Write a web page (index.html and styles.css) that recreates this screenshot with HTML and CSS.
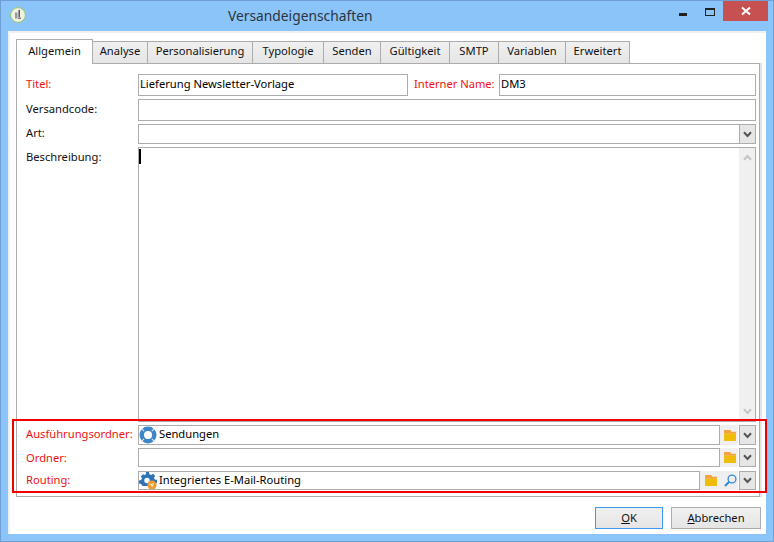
FILE: index.html
```html
<!DOCTYPE html>
<html lang="de">
<head>
<meta charset="utf-8">
<title>Versandeigenschaften</title>
<link rel="stylesheet" href="styles.css">
</head>
<body>
<div class="window">
  <header class="titlebar">
    <svg class="app-icon" viewBox="0 0 16 16" width="16" height="16">
      <circle cx="8" cy="8" r="7.400" fill="#eef2e4" stroke="#9cc45c" stroke-width="1"/>
      <path d="M5 5.500h2.500v6H5z" fill="#9a9a9a"/>
      <path d="M8.500 3h1.400v7H8.500z" fill="#4a4a4a"/>
      <path d="M8 10.500h3v1.500H8z" fill="#777"/>
    </svg>
    <span class="title">Versandeigenschaften</span>
    <div class="controls">
      <span class="ctl-min"></span>
      <span class="ctl-max"></span>
      <span class="ctl-close">
        <svg viewBox="0 0 10 10" width="10" height="10"><path d="M1 1.500 9 8.500M9 1.500 1 8.500" stroke="#fff" stroke-width="2" fill="none"/></svg>
      </span>
    </div>
  </header>

  <div class="client">
    <nav class="tabs">
      <span class="tab active">Allgemein</span>
      <span class="tab">Analyse</span>
      <span class="tab">Personalisierung</span>
      <span class="tab">Typologie</span>
      <span class="tab">Senden</span>
      <span class="tab">Gültigkeit</span>
      <span class="tab">SMTP</span>
      <span class="tab">Variablen</span>
      <span class="tab">Erweitert</span>
    </nav>

    <main class="panel">
      <div class="row row-22">
        <label class="label req">Titel:</label>
        <div class="field field-title">Lieferung Newsletter-Vorlage</div>
        <label class="label-inline req">Interner Name:</label>
        <div class="field grow">DM3</div>
      </div>
      <div class="row row-22">
        <label class="label">Versandcode:</label>
        <div class="field grow"></div>
      </div>
      <div class="row row-20">
        <label class="label label-tight">Art:</label>
        <div class="field grow"></div>
        <span class="drop"><svg class="chev" viewBox="0 0 9 7" width="9" height="7"><path d="M1 1.200 4.500 5 8 1.200" fill="none" stroke="#555" stroke-width="2"/></svg></span>
      </div>
      <div class="row row-memo">
        <label class="label">Beschreibung:</label>
        <div class="memo">
          <div class="memo-text"><span class="caret"></span></div>
          <div class="scroll">
            <svg viewBox="0 0 9 7" width="9" height="7"><path d="M1 5.800 4.500 2 8 5.800" fill="none" stroke="#c4c4c4" stroke-width="2"/></svg>
            <svg viewBox="0 0 9 7" width="9" height="7"><path d="M1 1.200 4.500 5 8 1.200" fill="none" stroke="#c4c4c4" stroke-width="2"/></svg>
          </div>
        </div>
      </div>
      <div class="row row-20 row-folder">
        <label class="label label-tight req">Ausführungsordner:</label>
        <div class="field grow with-icon">
          <svg class="icon" viewBox="0 0 18 18" width="18" height="18">
            <circle cx="9" cy="9" r="6.300" fill="none" stroke="#3f86c8" stroke-width="4.400"/>
            <path d="M9 0v3.500M9 14.500V18M0 9h3.500M14.500 9H18" stroke="#dcebf7" stroke-width="1" transform="rotate(45 9 9)"/>
          </svg>
          <span class="icon-text">Sendungen</span>
        </div>
        <span class="tool">
          <svg viewBox="0 0 13 12" width="12" height="11"><path d="M0 0h7l1 2h5v2H0z" fill="#f2a33a"/><path d="M0 4h13v8H0z" fill="#efbc0a"/></svg>
        </span>
        <span class="drop"><svg class="chev" viewBox="0 0 9 7" width="9" height="7"><path d="M1 1.200 4.500 5 8 1.200" fill="none" stroke="#555" stroke-width="2"/></svg></span>
      </div>
      <div class="row row-19 row-folder">
        <label class="label req">Ordner:</label>
        <div class="field grow"></div>
        <span class="tool">
          <svg viewBox="0 0 13 12" width="12" height="11"><path d="M0 0h7l1 2h5v2H0z" fill="#f2a33a"/><path d="M0 4h13v8H0z" fill="#efbc0a"/></svg>
        </span>
        <span class="drop"><svg class="chev" viewBox="0 0 9 7" width="9" height="7"><path d="M1 1.200 4.500 5 8 1.200" fill="none" stroke="#555" stroke-width="2"/></svg></span>
      </div>
      <div class="row row-19 row-folder row-routing">
        <label class="label label-tight req">Routing:</label>
        <div class="field grow with-icon">
          <svg class="icon" viewBox="0 0 18 18" width="18" height="18">
            <path d="M7 0h3l.4 2.200 1.800.800 1.900-1.200 2.100 2.100-1.200 1.900.800 1.800 2.200.4v3l-2.200.4-1 2.600H3.500l-1.300-2L0 11.500v-3l2.200-.4.800-1.800-1.200-1.900 2.100-2.100L5.800 3l1-.8z" fill="#2f74b5"/>
            <circle cx="8" cy="8.500" r="2.700" fill="#fff"/>
            <circle cx="13" cy="13" r="4.600" fill="#f09a2a"/>
            <path d="M10.500 12l2 .5.500 2 1.500-3.500" stroke="#fff" stroke-width="0.900" fill="none"/>
          </svg>
          <span class="icon-text">Integriertes E-Mail-Routing</span>
        </div>
        <span class="tool tool-wide">
          <svg viewBox="0 0 13 12" width="12" height="11"><path d="M0 0h7l1 2h5v2H0z" fill="#f2a33a"/><path d="M0 4h13v8H0z" fill="#efbc0a"/></svg>
          <svg viewBox="0 0 13 13" width="13" height="13"><circle cx="8" cy="5" r="3.900" fill="none" stroke="#2f8ade" stroke-width="1.300"/><path d="M5.200 7.800 1 12" stroke="#2f8ade" stroke-width="2"/></svg>
        </span>
        <span class="drop"><svg class="chev" viewBox="0 0 9 7" width="9" height="7"><path d="M1 1.200 4.500 5 8 1.200" fill="none" stroke="#555" stroke-width="2"/></svg></span>
      </div>
    </main>

    <footer class="actions">
      <button class="btn btn-ok"><u>O</u>K</button>
      <button class="btn btn-cancel"><u>A</u>bbrechen</button>
    </footer>
  </div>

  <div class="highlight"></div>
</div>
</body>
</html>
```

FILE: styles.css
```css
* { box-sizing: border-box; }
html, body { margin: 0; padding: 0; }
body {
  width: 774px;
  height: 542px;
  overflow: hidden;
  font-family: "Noto Sans", "Open Sans", sans-serif;
  font-size: 11.200px;
  color: #000;
}
.window {
  position: relative;
  width: 774px;
  height: 542px;
  padding: 0 7px 7px;
  background: #8ac4f8;
  border: 1px solid #6f9fd2;
  display: flex;
  flex-direction: column;
}
.titlebar {
  height: 30px;
  margin: 0 -7px;
  flex: none;
  display: flex;
  align-items: flex-start;
  position: relative;
}
.app-icon { margin: 6px 0 0 9px; flex: none; }
.title {
  margin: 5px 0 0 202px;
  font-size: 13.800px;
  line-height: 20px;
  color: #2b3440;
}
.controls {
  margin-left: auto;
  margin-right: 5px;
  display: flex;
  align-items: flex-start;
}
.ctl-min {
  width: 8px;
  height: 3px;
  margin-top: 12px;
  background: #222;
}
.ctl-max {
  width: 10px;
  height: 8px;
  margin: 7px 8px 0 18px;
  border: 1px solid #222;
  border-top-width: 2px;
}
.ctl-close {
  width: 45px;
  height: 20px;
  background: #c75050;
  display: flex;
  align-items: center;
  justify-content: center;
}
.client {
  flex: 1;
  min-height: 0;
  background: #fff;
  border: 0 solid #f0f0f0;
  border-width: 2px 0 0 2px;
  display: flex;
  flex-direction: column;
  padding: 6px 0 0 6px;
}
.tabs {
  display: grid;
  grid-template-columns: 76px 55px 105px 71px 57px 69px 49px 67px 64px;
  height: 25px;
  flex: none;
  position: relative;
  z-index: 1;
  margin-bottom: -1px;
}
.tab {
  height: 23px;
  margin-top: 2px;
  margin-right: -1px;
  border: 1px solid #acacac;
  background: linear-gradient(#f0f0f0, #e5e5e5);
  color: #111;
  text-align: center;
  line-height: 18px;
}
.tab.active {
  height: 25px;
  margin-top: 0;
  background: #fff;
  border-bottom: 0;
  line-height: 22px;
  z-index: 1;
}
.panel {
  width: 744px;
  height: 434px;
  flex: none;
  border: 1px solid #acacac;
  box-shadow: 2px 0 0 #e4e4e4;
  background: #fff;
  padding: 10px 3px 0 9px;
  display: flex;
  flex-direction: column;
  gap: 3px;
}
.row { display: flex; align-items: stretch; flex: none; }
.row-22 { height: 22px; }
.row-20 { height: 20px; }
.row-19 { height: 19px; }
.row-routing { margin-top: 1px; }
.label {
  width: 112px;
  flex: none;
  line-height: 20px;
  color: #111;
}
.label-tight { line-height: 18px; }
.label.req, .label-inline.req { color: #ee1111; }
.label-inline { width: 91px; flex: none; line-height: 20px; padding-left: 6px; white-space: nowrap; letter-spacing: -0.030px; }
.field {
  border: 1px solid #acacac;
  background: #fff;
  line-height: 18px;
  padding-left: 1px;
  white-space: nowrap;
  overflow: hidden;
}
.field-title { width: 270px; flex: none; }
.grow { flex: 1; min-width: 0; }
.with-icon { display: flex; align-items: center; gap: 2px; padding-left: 0; }
.icon { flex: none; }
.icon-text { line-height: 16px; margin-top: -2px; }
.drop {
  width: 17px;
  flex: none;
  margin-left: -1px;
  border: 1px solid #acacac;
  background: #e6e6e6;
  display: flex;
  align-items: center;
  justify-content: center;
}
.row-folder .drop { margin-left: 1px; }
.tool {
  width: 18px;
  flex: none;
  background: #efefef;
  display: flex;
  align-items: center;
  justify-content: flex-end;
  padding-right: 2px;
}
.tool-wide { width: 38px; gap: 7px; padding-right: 1px; }
.row-memo { height: 275px; }
.memo {
  flex: 1;
  border: 1px solid #acacac;
  display: flex;
  background: #fff;
}
.memo-text { flex: 1; padding: 1px 0 0 0; }
.caret { display: block; width: 2px; height: 15px; background: #000; }
.scroll {
  width: 16px;
  flex: none;
  background: #f0f0f0;
  display: flex;
  flex-direction: column;
  justify-content: space-between;
  align-items: center;
  padding: 6px 0;
}
.actions {
  flex: 1;
  display: flex;
  justify-content: flex-start;
  padding: 10px 0 0 579px;
  gap: 8px;
}
.btn {
  height: 22px;
  padding: 0 0 2px;
  font: inherit;
  color: #111;
  border: 1px solid #acacac;
  background: linear-gradient(#f0f0f0, #e5e5e5);
  line-height: 17px;
}
.btn-ok { width: 68px; border-color: #3c9bf0; }
.btn-cancel { width: 90px; }
.highlight {
  position: absolute;
  left: 11px;
  top: 418px;
  width: 755px;
  height: 74px;
  border: 2px solid #f10000;
  z-index: 2;
  pointer-events: none;
}
```
